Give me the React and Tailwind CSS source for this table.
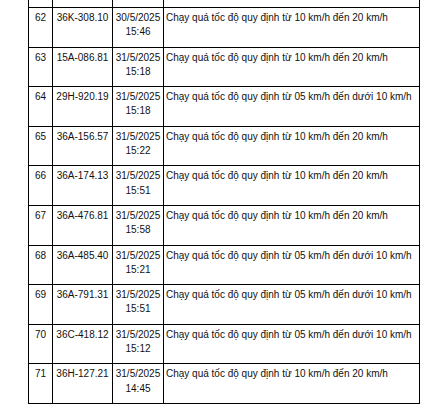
import React from "react";

const rows = [
  ["62", "36K-308.10", "30/5/2025", "15:46", "Chạy quá tốc độ quy định từ 10 km/h đến 20 km/h"],
  ["63", "15A-086.81", "31/5/2025", "15:18", "Chạy quá tốc độ quy định từ 10 km/h đến 20 km/h"],
  ["64", "29H-920.19", "31/5/2025", "15:18", "Chạy quá tốc độ quy định từ 05 km/h đến dưới 10 km/h"],
  ["65", "36A-156.57", "31/5/2025", "15:22", "Chạy quá tốc độ quy định từ 10 km/h đến 20 km/h"],
  ["66", "36A-174.13", "31/5/2025", "15:51", "Chạy quá tốc độ quy định từ 10 km/h đến 20 km/h"],
  ["67", "36A-476.81", "31/5/2025", "15:58", "Chạy quá tốc độ quy định từ 10 km/h đến 20 km/h"],
  ["68", "36A-485.40", "31/5/2025", "15:21", "Chạy quá tốc độ quy định từ 05 km/h đến dưới 10 km/h"],
  ["69", "36A-791.31", "31/5/2025", "15:51", "Chạy quá tốc độ quy định từ 05 km/h đến dưới 10 km/h"],
  ["70", "36C-418.12", "31/5/2025", "15:12", "Chạy quá tốc độ quy định từ 05 km/h đến dưới 10 km/h"],
  ["71", "36H-127.21", "31/5/2025", "14:45", "Chạy quá tốc độ quy định từ 10 km/h đến 20 km/h"],
];

const Row = ({ r }) => (
  <div className="flex h-[39.6px] border-b border-black">
    <div className="w-[24px] shrink-0 border-r border-black pt-[3px] text-center">{r[0]}</div>
    <div className="w-[60px] shrink-0 border-r border-black pt-[3px] text-center">{r[1]}</div>
    <div className="w-[51px] shrink-0 border-r border-black pt-[3px] text-center">
      {r[2]}
      <br />
      {r[3]}
    </div>
    <div className="w-[256px] shrink-0 border-r border-black pt-[3px] pl-[2px] whitespace-nowrap">{r[4]}</div>
  </div>
);

export default function App() {
  return (
    <div className="w-[438px] h-[412px] bg-white overflow-hidden">
      <div
        className="ml-[28px] w-[392px] border-l border-black text-[10px] leading-[14.3px] text-[#111]"
        style={{ fontFamily: '"Liberation Sans", Arial, sans-serif' }}
      >
        {/* tail of the row above, cut off by the top edge */}
        <div className="flex h-[8px] border-b border-black">
          <div className="w-[24px] shrink-0 border-r border-black" />
          <div className="w-[60px] shrink-0 border-r border-black" />
          <div className="w-[51px] shrink-0 border-r border-black" />
          <div className="w-[256px] shrink-0 border-r border-black" />
        </div>
        {rows.map((r) => (
          <Row key={r[0]} r={r} />
        ))}
      </div>
    </div>
  );
}
